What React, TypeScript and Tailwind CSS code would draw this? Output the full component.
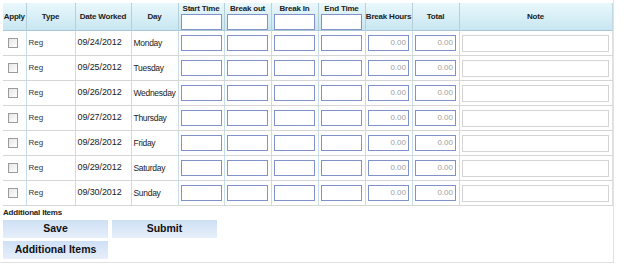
import React from "react";

const rows = [
  ["09/24/2012", "Monday"],
  ["09/25/2012", "Tuesday"],
  ["09/26/2012", "Wednesday"],
  ["09/27/2012", "Thursday"],
  ["09/28/2012", "Friday"],
  ["09/29/2012", "Saturday"],
  ["09/30/2012", "Sunday"],
];

const timeInput =
  "block mx-auto w-[41px] h-[16px] border border-[#8092c9] bg-white";
const numInput =
  "block mx-auto w-[41px] h-[16px] border border-[#8092c9] bg-white text-right pr-[2px] text-[8px] leading-[14px] text-[#a0a0a0]";

export default function App() {
  const th =
    "border-r border-[#b5cfdb] text-[8px] font-bold text-[#222] align-middle p-0 whitespace-nowrap tracking-[-0.2px]";
  const td = "border-r border-[#c8dcf0] border-b border-b-[#d6d6d6] p-0 align-middle";
  return (
    <div
      className="w-[614px] h-[263px] border-r border-b border-[#e2e2e2] bg-white pl-[3px] pt-[3px]"
      style={{ fontFamily: '"Liberation Sans", Arial, sans-serif' }}
    >
      <table className="table-fixed border-collapse w-[609px]">
        <colgroup>
          <col className="w-[23px]" />
          <col className="w-[49px]" />
          <col className="w-[56px]" />
          <col className="w-[47px]" />
          <col className="w-[46px]" />
          <col className="w-[47px]" />
          <col className="w-[47px]" />
          <col className="w-[47px]" />
          <col className="w-[47px]" />
          <col className="w-[47px]" />
          <col className="w-[153px]" />
        </colgroup>
        <thead>
          <tr className="h-[26px] bg-gradient-to-b from-[#eaf8fc] to-[#c8e6f1] border-b border-[#a9c7d6]">
            <th className={th}>Apply</th>
            <th className={th}>Type</th>
            <th className={th}>Date Worked</th>
            <th className={th}>Day</th>
            {["Start Time", "Break out", "Break In", "End Time"].map((h) => (
              <th key={h} className={th + " align-top"}>
                <div className="leading-[10px] pt-[1px]">{h}</div>
                <input className={timeInput} />
              </th>
            ))}
            <th className={th + " text-[7.5px]"}>Break Hours</th>
            <th className={th}>Total</th>
            <th className={th + " border-r-[#c0d8e2]"}>Note</th>
          </tr>
        </thead>
        <tbody>
          {rows.map(([d, day]) => (
            <tr key={d} className="h-[25px]">
              <td className={td}>
                <span className="block ml-[5px] w-[10px] h-[10px] border border-[#9b9b9b] bg-gradient-to-br from-[#e6e6e6] to-[#ffffff]" />
              </td>
              <td className={td + " text-[8px] text-[#333] pl-[2px]"}>Reg</td>
              <td className={td + " text-[9px] text-[#222] pl-[2px] tracking-[-0.1px]"}>{d}</td>
              <td className={td + " text-[8.5px] text-[#222] pl-[2px] whitespace-nowrap tracking-[-0.3px]"}>
                {day}
              </td>
              {[0, 1, 2, 3].map((i) => (
                <td key={i} className={td}>
                  <input className={timeInput} />
                </td>
              ))}
              <td className={td}>
                <div className={numInput}>0.00</div>
              </td>
              <td className={td}>
                <div className={numInput}>0.00</div>
              </td>
              <td className={td + " border-r-[#e0e0e0]"}>
                <input className="block ml-[2px] w-[147px] h-[17px] border border-[#d4d4d4] bg-white" />
              </td>
            </tr>
          ))}
        </tbody>
      </table>
      <div className="text-[8px] font-bold text-[#222] mt-[2px] leading-[10px] tracking-[-0.2px]">
        Additional Items
      </div>
      <div className="mt-[2px] grid grid-cols-[105px_105px] gap-x-[4px] gap-y-[3px] w-[214px]">
        <button className="h-[18px] bg-gradient-to-b from-[#cfe0f5] to-[#e6effa] text-[10.5px] font-bold text-[#111]">
          Save
        </button>
        <button className="h-[18px] bg-gradient-to-b from-[#cfe0f5] to-[#e6effa] text-[10.5px] font-bold text-[#111]">
          Submit
        </button>
        <button className="h-[18px] bg-gradient-to-b from-[#cfe0f5] to-[#e6effa] text-[10.5px] font-bold text-[#111]">
          Additional Items
        </button>
      </div>
    </div>
  );
}
